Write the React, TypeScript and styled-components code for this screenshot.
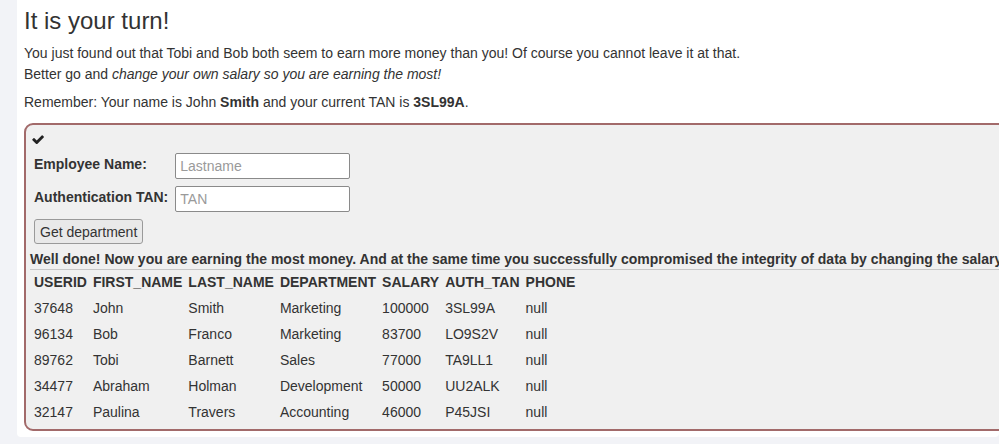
import React from "react";
import styled, { createGlobalStyle } from "styled-components";

const GlobalStyle = createGlobalStyle`
  html, body {
    margin: 0;
    padding: 0;
    overflow: hidden;
    background: #f2f3f7;
  }
  body {
    font-family: "Liberation Sans", Arial, Helvetica, sans-serif;
    font-size: 14px;
    color: #333;
  }
`;

const Page = styled.div`
  display: flex;
  padding-left: 17px;
  height: 444px;
  box-sizing: border-box;
`;

const Panel = styled.main`
  flex: 1;
  min-width: 0;
  background: #fff;
  height: 437px;
  border-radius: 0 0 4px 4px;
  padding: 0 0 0 7px;
  box-sizing: border-box;
  overflow: hidden;
`;

const Title = styled.h3`
  font-size: 24px;
  font-weight: 400;
  line-height: 1.1;
  margin: 8px 0 9px;
`;

const Para = styled.p<{ $gap?: number }>`
  margin: 0 0 ${(p) => p.$gap ?? 0}px;
  line-height: 21px;
  white-space: nowrap;
`;

const AttackBox = styled.section`
  width: 1100px;
  box-sizing: border-box;
  background: #f0f0f0;
  border: 2px solid #a26a6a;
  border-radius: 9px;
  padding: 4px 4px 3px 4px;
`;

const CheckRow = styled.div`
  height: 21px;
  display: flex;
  align-items: center;
  padding-left: 2px;
`;

const FormGrid = styled.div`
  display: grid;
  grid-template-columns: max-content max-content;
  column-gap: 7px;
  row-gap: 7px;
  padding: 3px 0 0 4px;
  align-items: center;
`;

const Label = styled.label`
  font-weight: 700;
  line-height: 20px;
  padding-bottom: 4px;
`;

const Input = styled.input`
  width: 175px;
  height: 26px;
  box-sizing: border-box;
  border: 1px solid #8a8a8a;
  border-radius: 2px;
  background: #fff;
  padding: 0 4px;
  font-family: inherit;
  font-size: 14px;
  color: #333;
  &::placeholder {
    color: #9a9a9a;
  }
`;

const Button = styled.button`
  justify-self: start;
  grid-column: 1 / span 2;
  height: 25px;
  box-sizing: border-box;
  padding: 0 5px;
  font-family: inherit;
  font-size: 14px;
  color: #333;
  background: #e9e9e9;
  border: 1px solid #9a9a9a;
  border-radius: 3px;
`;

const Feedback = styled.div`
  margin-top: 5px;
  font-weight: 700;
  line-height: 20px;
  white-space: nowrap;
`;

const Rule = styled.hr`
  margin: 0;
  border: 0;
  border-top: 1px solid #c8c8c8;
`;

const Table = styled.table`
  border-collapse: separate;
  border-spacing: 2px;
  margin-top: -2px;
  font-size: 14px;
`;

const Th = styled.th`
  text-align: left;
  font-weight: 700;
  line-height: 20px;
  padding: 2px;
`;

const Td = styled.td`
  line-height: 20px;
  padding: 2px;
`;

const rows = [
  ["37648", "John", "Smith", "Marketing", "100000", "3SL99A", "null"],
  ["96134", "Bob", "Franco", "Marketing", "83700", "LO9S2V", "null"],
  ["89762", "Tobi", "Barnett", "Sales", "77000", "TA9LL1", "null"],
  ["34477", "Abraham", "Holman", "Development", "50000", "UU2ALK", "null"],
  ["32147", "Paulina", "Travers", "Accounting", "46000", "P45JSI", "null"],
];

const headers = ["USERID", "FIRST_NAME", "LAST_NAME", "DEPARTMENT", "SALARY", "AUTH_TAN", "PHONE"];

const Check = () => (
  <svg width="12" height="9" viewBox="90 360 1590 1080" aria-hidden="true">
    <path
      fill="#222"
      d="M1671 566q0 40-28 68l-724 724-136 136q-28 28-68 28t-68-28l-136-136-362-362q-28-28-28-68t28-68l136-136q28-28 68-28t68 28l294 295 656-657q28-28 68-28t68 28l136 136q28 28 28 68z"
    />
  </svg>
);

export default function App() {
  return (
    <>
      <GlobalStyle />
      <Page>
        <Panel>
          <Title>It is your turn!</Title>
          <Para>
            You just found out that Tobi and Bob both seem to earn more money than you! Of course you cannot leave it at
            that.
          </Para>
          <Para $gap={7}>
            Better go and <em>change your own salary so you are earning the most!</em>
          </Para>
          <Para $gap={10}>
            Remember: Your name is John <strong>Smith</strong> and your current TAN is <strong>3SL99A</strong>.
          </Para>
          <AttackBox>
            <CheckRow>
              <Check />
            </CheckRow>
            <FormGrid>
              <Label>Employee Name:</Label>
              <Input placeholder="Lastname" />
              <Label>Authentication TAN:</Label>
              <Input placeholder="TAN" />
              <Button>Get department</Button>
            </FormGrid>
            <Feedback>
              Well done! Now you are earning the most money. And at the same time you successfully compromised the
              integrity of data by changing the salary!
            </Feedback>
            <Rule />
            <Table>
              <thead>
                <tr>
                  {headers.map((h) => (
                    <Th key={h}>{h}</Th>
                  ))}
                </tr>
              </thead>
              <tbody>
                {rows.map((r) => (
                  <tr key={r[0]}>
                    {r.map((c, i) => (
                      <Td key={i}>{c}</Td>
                    ))}
                  </tr>
                ))}
              </tbody>
            </Table>
          </AttackBox>
        </Panel>
      </Page>
    </>
  );
}
